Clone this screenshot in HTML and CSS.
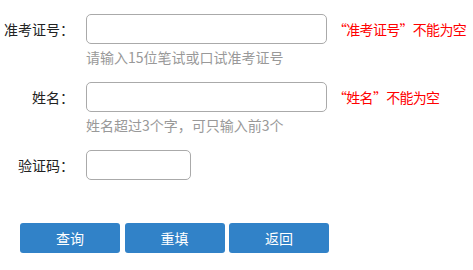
FILE: index.html
```html
<!DOCTYPE html>
<html lang="zh-CN">
<head>
<meta charset="utf-8">
<title>查询</title>
<link rel="stylesheet" href="styles.css">
</head>
<body>
<form class="form">
  <div class="field">
    <div class="row">
      <label class="label">准考证号：</label>
      <input class="input input-long" type="text">
      <span class="error">“准考证号”不能为空</span>
    </div>
    <div class="hint">请输入15位笔试或口试准考证号</div>
  </div>
  <div class="field">
    <div class="row">
      <label class="label">姓名：</label>
      <input class="input input-long" type="text">
      <span class="error">“姓名”不能为空</span>
    </div>
    <div class="hint">姓名超过3个字，可只输入前3个</div>
  </div>
  <div class="field field-last">
    <div class="row">
      <label class="label">验证码：</label>
      <input class="input input-short" type="text">
    </div>
  </div>
  <div class="buttons">
    <button type="button" class="btn">查询</button>
    <button type="button" class="btn">重填</button>
    <button type="button" class="btn">返回</button>
  </div>
</form>
</body>
</html>
```

FILE: styles.css
```css
html, body {
  margin: 0;
  padding: 0;
  background: #fff;
}
body {
  font-family: "Noto Sans CJK SC", "Noto Sans", sans-serif;
  font-size: 14px;
  color: #222;
}
.form {
  padding-top: 14px;
}
.field {
  margin-bottom: 16px;
}
.field-last {
  margin-bottom: 43px;
}
.row {
  display: flex;
  align-items: center;
  height: 30px;
}
.label {
  width: 74px;
  text-align: right;
  line-height: 30px;
  margin-right: 12px;
  white-space: nowrap;
}
.input {
  box-sizing: border-box;
  height: 30px;
  border: 1px solid #aaa;
  border-radius: 5px;
  background: #fff;
  padding: 0 6px;
  margin: 0;
  outline: none;
}
.input-long {
  width: 241px;
}
.input-short {
  width: 105px;
}
.error {
  margin-left: 6px;
  color: #ff0000;
  white-space: nowrap;
  letter-spacing: -0.7px;
}
.hint {
  margin-left: 86px;
  margin-top: 4px;
  line-height: 18px;
  color: #999;
}
.buttons {
  display: flex;
  gap: 4.5px;
  padding-left: 20px;
}
.btn {
  width: 100px;
  height: 30px;
  border: none;
  border-radius: 3px;
  background: #3182c8;
  color: #fff;
  font-family: "Noto Sans CJK SC", "Noto Sans", sans-serif;
  font-size: 14px;
  padding: 0;
  cursor: pointer;
}
```
